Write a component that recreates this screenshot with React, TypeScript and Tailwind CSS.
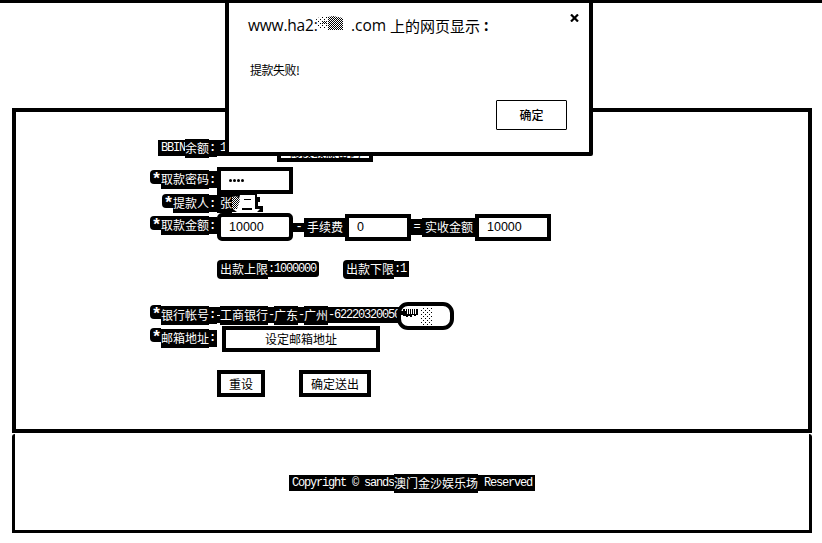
import type { ReactNode } from "react";

const mono = "font-['Liberation_Mono','Noto_Sans_CJK_SC',monospace] text-[12px] tracking-[-1.2px]";
const cjk = "font-['Noto_Sans_CJK_SC',sans-serif] text-[12px]";
const sans = "font-['Liberation_Sans','Noto_Sans_CJK_SC',sans-serif]";

/* Half-width run: 6px per character, slightly lower box */
function A({ children, className = "" }: { children: ReactNode; className?: string }) {
  return (
    <span className={`${mono} inline-flex h-4 shrink-0 items-center whitespace-pre bg-black leading-none text-white ${className}`}>
      {children}
    </span>
  );
}

/* Full-width run: 12px per character, taller box */
function C({ children, className = "" }: { children: ReactNode; className?: string }) {
  return (
    <span className={`${cjk} inline-flex h-[19px] shrink-0 items-center whitespace-pre bg-black pb-px leading-none text-white ${className}`}>
      {children}
    </span>
  );
}

function Label({ star = true, prefix = "", text }: { star?: boolean; prefix?: string; text: string }) {
  return (
    <div className="flex w-[201px] shrink-0 items-center justify-end">
      {star && (
        <span className={`${sans} mb-1.5 flex h-[14px] w-[11px] items-start justify-end rounded-l-sm bg-black pr-px text-[17px] font-bold leading-none text-white`}>
          *
        </span>
      )}
      {prefix && <A className="pl-[3px]">{prefix}</A>}
      <C>{text}</C>
      <A className="h-[17px] pr-0.5 font-bold">:</A>
    </div>
  );
}

function Field({ value, className }: { value: string; className: string }) {
  return (
    <div className={`${sans} flex h-[27px] shrink-0 items-center border-4 border-black bg-white pl-2 text-[12.5px] text-black ${className}`}>
      {value}
    </div>
  );
}

function Btn({ children, className = "" }: { children: ReactNode; className?: string }) {
  return (
    <button className={`${cjk} flex shrink-0 items-center justify-center border-4 border-black bg-white leading-none text-black ${className}`}>
      {children}
    </button>
  );
}

function Dialog() {
  return (
    <div className={`${sans} absolute left-[225px] top-0 flex h-[156px] w-[368px] flex-col rounded-[2px] border-x-4 border-b-4 border-t-[3px] border-black bg-white text-black`}>
      <div className="flex h-[46px] items-center pl-[19px]">
        <div className="flex items-center whitespace-pre font-['Open_Sans','Noto_Sans_CJK_SC',sans-serif] text-[15.5px] font-medium leading-none">
          <span className="w-[68px] tracking-[-0.2px]">www.ha2:</span>
          <svg className="mb-1.5 mr-[7px] h-4 w-[28px]" viewBox="0 0 28 16">
            <defs>
              <pattern id="dots" width="2" height="2" patternUnits="userSpaceOnUse">
                <path d="M0 0h1v1h-1zM1 1h1v1h-1z" />
              </pattern>
              <pattern id="sparse" width="4" height="4" patternUnits="userSpaceOnUse">
                <path d="M0 0h1v1h-1zM2 2h1v1h-1z" />
              </pattern>
            </defs>
            <path d="M0 4L6 1h6v12H2z" fill="url(#sparse)" />
            <path d="M6 6h5v3h-5z" fill="url(#dots)" />
            <path d="M12 2L17 1L27 3v12H12z" fill="url(#dots)" />
          </svg>
          <span className="w-[39px]">.com</span>
          <span className="pb-0.5 font-['Noto_Sans_CJK_SC',sans-serif] text-[15px] font-normal">上的网页显示</span>
          <span className="pl-1 font-bold">:</span>
        </div>
        <svg className="mb-[17px] ml-auto mr-2.5 h-2 w-[9px]" viewBox="0 0 9 8" stroke="#000" strokeWidth="2.2">
          <path d="M1 .5L8 7.5M8 .5L1 7.5" />
        </svg>
      </div>
      <div className={`${cjk} flex h-[42px] items-center pl-[21px] leading-none tracking-[-0.5px]`}>
        提款失败!
      </div>
      <div className="mt-[9px] flex justify-end pr-[22px]">
        <button className={`${cjk} h-[30px] w-[71px] rounded-[1px] border border-black font-medium leading-none`}>确定</button>
      </div>
    </div>
  );
}

function Masked() {
  return (
    <svg className="absolute left-[180px] top-[-4px] h-[28px] w-[57px]" viewBox="0 0 57 28">
      <rect x="2" y="2" width="53" height="24" rx="9" fill="#fff" stroke="#000" strokeWidth="4" />
      <path d="M3 9h3v-2h2v2h1v-2h1v5h1v-5h1v5h1v-5h1v5h1v-5h1v5h1v-5h1v5h1v-5h2v6h-2v1h-2v-1h-2v2h-2v-1h-2v1h-2v-1H6v-1H3z" />
      <rect x="24" y="5" width="12" height="18" fill="url(#sparse)" />
    </svg>
  );
}

export default function App() {
  return (
    <div className="relative flex h-[543px] w-[822px] flex-col overflow-hidden border-t-[3px] border-black bg-white">
      <main className="ml-3 mt-[105px] h-[325px] w-[800px] shrink-0 border-4 border-black pt-[22px]">
        <div className="flex h-7 items-center">
          <Label star={false} prefix="BBIN" text="余额" />
          <A className="pl-[3px]">10000</A>
          <Btn className="ml-[27px] h-[19px] w-24 self-end">修改取款密码</Btn>
        </div>
        <div className="mt-[5px] flex h-[27px] items-center">
          <div className="mb-0.5 flex">
            <Label text="取款密码" />
          </div>
          <div className="flex h-[27px] w-[76px] items-center gap-px border-4 border-black bg-white pl-2">
            {[0, 1, 2, 3].map((i) => (
              <i key={i} className="h-[3px] w-[3px] rounded-full bg-black" />
            ))}
          </div>
        </div>
        <div className="flex h-[19px] items-center">
          <Label text="提款人" />
          <C className="pl-[3px]">张</C>
          <svg className="h-[19px] w-[34px]" viewBox="0 0 34 19">
            <path d="M0 0h25v3h3v5h-2v4h5v6H0z" />
            <path d="M8 1h15v14h5l-3 3H5l-4-3 4-3z" fill="#fff" />
            <path d="M0 3l5-1 3 4-3 9H0z" fill="#fff" />
            <path d="M0 3l5-1 3 4-3 9H0z" fill="url(#dots)" />
            <path d="M12 5h7v1h-7zM10 14h10v2h-10z" />
          </svg>
        </div>
        <div className="flex h-[28px] items-center">
          <div className="mb-[3px] flex">
            <Label text="取款金额" />
          </div>
          <Field value="10000" className="h-[28px] w-[76px] rounded-[5px]" />
          <A className="h-[9px] w-[11px] justify-center">-</A>
          <C className="w-[41px] pl-[3px]">手续费</C>
          <Field value="0" className="w-[66px]" />
          <A className="w-[11px] justify-center">=</A>
          <C className="w-[53px] pl-[3px]">实收金额</C>
          <Field value="10000" className="w-[76px]" />
        </div>
        <div className="mt-[18px] flex h-5 items-center pl-[201px]">
          <C className="rounded-l-sm pl-[3px]">出款上限</C>
          <A className="rounded-r-[3px] pr-[3px]">:1000000</A>
          <C className="ml-6 rounded-l-sm pl-[3px]">出款下限</C>
          <A className="pr-[3px]">:1</A>
        </div>
        <div className="mt-[26px] flex h-5 items-center">
          <Label text="银行帐号" />
          <div className="relative flex items-center">
            <span className="flex h-4 w-[3px] items-center bg-black">
              <i className="h-px w-[3px] bg-white" />
            </span>
            <C>工商银行</C>
            <A>-</A>
            <C>广东</C>
            <A>-</A>
            <C>广州</C>
            <A>-62220320050</A>
            <Masked />
          </div>
        </div>
        <div className="mt-px flex h-[26px] items-center">
          <div className="mb-0.5 flex">
            <Label text="邮箱地址" />
          </div>
          <Btn className="ml-[5px] h-[26px] w-[158px]">设定邮箱地址</Btn>
        </div>
        <div className="mt-[18px] flex pl-[201px]">
          <Btn className="h-[27px] w-12">重设</Btn>
          <Btn className="ml-[34px] h-[27px] w-[72px]">确定送出</Btn>
        </div>
      </main>
      <footer className="ml-3 mt-px flex h-[99px] w-[800px] shrink-0 items-center justify-center rounded-t-[3px] border-x-[3px] border-b-[3px] border-black pt-0.5">
        <A className="pl-[3px] text-[11px] tracking-[-0.6px]">Copyright © sands</A>
        <C>澳门金沙娱乐场</C>
        <A className="pr-[3px] text-[11px] tracking-[-0.6px]"> Reserved</A>
      </footer>
      <div className="absolute left-0 top-[-3px]">
        <Dialog />
      </div>
    </div>
  );
}
